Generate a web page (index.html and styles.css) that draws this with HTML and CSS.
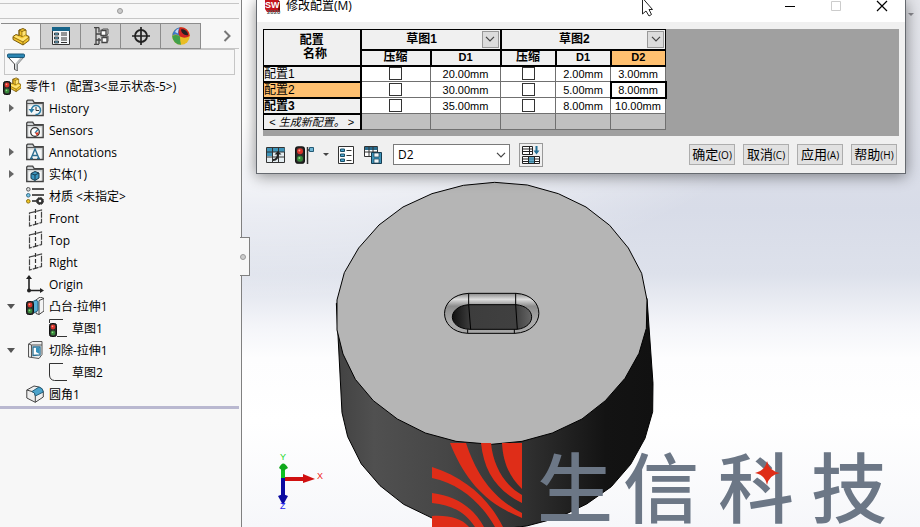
FILE: index.html
```
<!DOCTYPE html>
<html lang="zh-CN">
<head>
  <meta charset="UTF-8" />
  <meta name="viewport" content="width=device-width, initial-scale=1" />
  <title>修改配置</title>
  <link rel="stylesheet" href="styles.css">
</head>
<body>

  <!-- Shared icons -->
  <svg class="sprite" aria-hidden="true">
    <symbol id="part" viewBox="0 0 18 18">
      <path d="M7 2l4-1.500 3 1.500v5l3 1.500v4l-6 4.500-10-5.500v-3l3-2 3 1z" fill="#f3c52c" stroke="#7a5c10"/>
      <path d="M7 2l3 1.500v5L7 7zM10 3.500l4-1.500M10 8.500l4-2M1 9l10 5v3M11 14l6-5" fill="none" stroke="#7a5c10" stroke-width=".8"/>
      <path d="M10.500 4l3-1.300v4l-3 1.500zM2 8.600l2-1.200 6 3 3.500-2 2.500.8-5 4z" fill="#ffe477"/>
    </symbol>
    <symbol id="light" viewBox="0 0 8 14">
      <rect x=".5" y=".5" width="7" height="13" rx="2" fill="#2d2d2d" stroke="#111"/>
      <circle cx="4" cy="4" r="2.400" fill="#d9322a"/><circle cx="3.500" cy="3.400" r=".8" fill="#ff9c8c"/>
      <circle cx="4" cy="10" r="2.400" fill="#38873a"/><circle cx="3.500" cy="9.400" r=".8" fill="#8fdc88"/>
    </symbol>
    <symbol id="folder" viewBox="0 0 18 18">
      <path d="M.7 16.500V2l1-.8h5l1.500 2.500h9v12.800z" fill="#d0d3d4" stroke="#444" stroke-width="1.300"/>
      <path d="M2.500 6.500h13v9h-13z" fill="#f6f7f7"/>
      <path d="M1 4.500h16.500" stroke="#555"/>
    </symbol>
    <symbol id="plane" viewBox="0 0 18 18">
      <path d="M3.500 4L15.500 1v12.500l-12 3.500z" fill="none" stroke="#444" stroke-width="1.200" stroke-dasharray="6 1"/>
      <path d="M9.500 0v18" stroke="#333" stroke-width="1.200" stroke-dasharray="4 2"/>
    </symbol>
    <symbol id="chevron" viewBox="0 0 10 6">
      <path d="M1 .8l4 4 4-4" fill="none" stroke="#444" stroke-width="1.200"/>
    </symbol>
  </svg>

  <div class="app">
    <aside class="sidebar">
      <div class="grip"><span class="dot"></span></div>

      <nav class="tabs">
        <button class="tab active" aria-label="FeatureManager"><svg class="icon"><use href="#part"/></svg></button>
        <button class="tab" aria-label="PropertyManager">
          <svg class="icon" viewBox="0 0 18 18">
            <path d="M.5.500h17v17H.500z" fill="#f5f8fa" stroke="#333"/><path d="M0 0h18v4H0z" fill="#176489"/>
            <path d="M2.500 6h4v2h-4zM2.500 10h4v2h-4zM2.500 14h4v2h-4z" fill="#6db3d6" stroke="#222" stroke-width=".8"/>
            <path d="M9 6h6M9 8h6M9 11h6M9 13h6M9 15.500h6" stroke="#333"/>
          </svg>
        </button>
        <button class="tab" aria-label="ConfigurationManager">
          <svg class="icon" viewBox="0 0 18 18">
            <path d="M2 .500h5M4 .500v17M2 17.500h5M7 .500v5M7 11v6M4 7h5M4 13h5" fill="none" stroke="#444" stroke-width="1.300"/>
            <path d="M9 3.500h5v5H9zM10 10.500h5v5h-5z" fill="#fff" stroke="#444" stroke-width="1.300"/>
            <path d="M9 3.500l2-1.500h5v5l-2 1.500M10 10.500l2-1.500h4v5l-1 1.500" fill="none" stroke="#555"/>
          </svg>
        </button>
        <button class="tab" aria-label="DimXpertManager">
          <svg class="icon" viewBox="0 0 18 18">
            <circle cx="9" cy="9" r="6" fill="none" stroke="#222" stroke-width="1.800"/>
            <path d="M9 0v18M0 9h18" stroke="#222" stroke-width="1.700"/>
          </svg>
        </button>
        <button class="tab" aria-label="DisplayManager">
          <svg class="icon" viewBox="0 0 18 18">
            <circle cx="9" cy="9" r="8.800" fill="#e9bd24"/>
            <path d="M8 .3A8.800 8.800 0 0 0 .2 9q4-3 7.800.500z" fill="#3c78cc"/>
            <path d="M8 .3A8.800 8.800 0 0 1 17.800 9q-5 3-9.800.500C6 7 6 4 8 .3z" fill="#cf2723"/>
            <path d="M.2 9q4-2 7.800.500 0 5 1 8.300A8.800 8.800 0 0 1 .2 9z" fill="#41a04b"/>
            <path d="M9 2.500c3-1 7 2 7 5.500-3 1-7-2-7-5.500z" fill="#222"/>
            <path d="M3 5c1-2 2-3 4-3.500-1 2-1 4-1 5z" fill="#fff" opacity=".7"/>
          </svg>
        </button>
        <button class="more" aria-label="更多">
          <svg width="8" height="12" viewBox="0 0 8 12"><path d="M1.500 1l5 5-5 5" fill="none" stroke="#777" stroke-width="2"/></svg>
        </button>
      </nav>

      <label class="filter">
        <svg class="icon" viewBox="0 0 18 18">
          <path d="M1 4l6.500 7v5.500l3 1V11L17 4z" fill="#fff" stroke="#444"/>
          <path d="M8.500 10.500v6l2 .8V11l5.500-6h-3z" fill="#b9bdbf"/>
          <rect x=".5" y="1" width="17" height="3.500" rx="1" fill="#2a86b4" stroke="#1c5878"/>
        </svg>
        <input type="text" aria-label="过滤">
      </label>

      <ul class="tree">
        <li class="row root">
          <svg class="icon" viewBox="0 0 18 18"><use href="#part" x="4" y="0" width="15" height="16"/><use href="#light" x="0" y="4" width="8" height="14"/></svg>
          <span class="root-name">零件1</span><span>(配置3&lt;显示状态-5&gt;)</span>
        </li>
        <li class="row">
          <button class="twisty" aria-label="展开"></button>
          <svg class="icon" viewBox="0 0 18 18"><use href="#folder"/><path d="M5.500 11a4.500 4.500 0 1 1 4 4.500" fill="none" stroke="#2b7da5" stroke-width="1.500"/><path d="M2.500 10h6l-3 4z" fill="#2b7da5"/><path d="M10 8v3.500h3" fill="none" stroke="#333"/></svg>
          <span>History</span>
        </li>
        <li class="row">
          <span class="twisty none"></span>
          <svg class="icon" viewBox="0 0 18 18"><use href="#folder"/><circle cx="9" cy="11" r="4.300" fill="#fff" stroke="#333" stroke-width="1.300"/><path d="M9 12l3-3.500" stroke="#2b7da5" stroke-width="1.300"/><path d="M9 11.500h4l-2 3.500z" fill="#de3b27"/></svg>
          <span>Sensors</span>
        </li>
        <li class="row">
          <button class="twisty" aria-label="展开"></button>
          <svg class="icon" viewBox="0 0 18 18"><use href="#folder"/><path d="M5 15.500L9 6l4 9.500M6.500 12.500h5M4 15.500h3M11 15.500h3" fill="none" stroke="#2b6d90" stroke-width="1.400"/></svg>
          <span>Annotations</span>
        </li>
        <li class="row">
          <button class="twisty" aria-label="展开"></button>
          <svg class="icon" viewBox="0 0 18 18"><use href="#folder"/><path d="M5 8.500L9 6.500l4 1.500v5l-4 2.500-4-2z" fill="#3b96c0" stroke="#173c50"/><path d="M5 8.500l4 1.500 4-2M9 10v5" fill="none" stroke="#173c50"/></svg>
          <span>实体(1)</span>
        </li>
        <li class="row">
          <span class="twisty none"></span>
          <svg class="icon" viewBox="0 0 18 18">
            <path d="M6 2h12M6 8h12M6 14h5" stroke="#222" stroke-width="1.600"/>
            <circle cx="2.300" cy="2.300" r="1.800" fill="#ddd" stroke="#555"/><circle cx="2.300" cy="8.300" r="1.800" fill="#76c6e8" stroke="#366c86"/><circle cx="2.300" cy="14.300" r="1.800" fill="#f2c722" stroke="#8c7010"/>
            <circle cx="14" cy="14" r="2.400" fill="none" stroke="#333" stroke-width="2.200"/><circle cx="14" cy="14" r="3.500" fill="none" stroke="#333" stroke-dasharray="1.500 1.250"/>
          </svg>
          <span>材质 &lt;未指定&gt;</span>
        </li>
        <li class="row"><span class="twisty none"></span><svg class="icon"><use href="#plane"/></svg><span>Front</span></li>
        <li class="row"><span class="twisty none"></span><svg class="icon"><use href="#plane"/></svg><span>Top</span></li>
        <li class="row"><span class="twisty none"></span><svg class="icon"><use href="#plane"/></svg><span>Right</span></li>
        <li class="row">
          <span class="twisty none"></span>
          <svg class="icon" viewBox="0 0 18 18"><path d="M3 3v12.500h13" fill="none" stroke="#222" stroke-width="1.600"/><path d="M0 4l3-4 3 4zM14 13l4 2.500-4 2.500z" fill="#222"/><circle cx="3" cy="15.500" r="2" fill="#222"/></svg>
          <span>Origin</span>
        </li>
        <li class="row">
          <button class="twisty open" aria-label="折叠"></button>
          <svg class="icon" viewBox="0 0 18 18"><path d="M10 3l4-3 4 1.500V14l-5 3.500-3-1z" fill="#f4f4f4" stroke="#444"/><path d="M13 3.500v14M13 3.500l5-2" fill="none" stroke="#444"/><path d="M6 5l4-2 2 1.500v9L8 16z" fill="#58b0d8" stroke="#255f7d"/><use href="#light" x="0" y="4" width="8" height="14"/></svg>
          <span>凸台-拉伸1</span>
        </li>
        <li class="row child">
          <svg class="icon" viewBox="0 0 18 18"><path d="M.5 4V.500H14M8 17.500h10" fill="none" stroke="#333"/><use href="#light" x="0" y="4" width="8" height="14"/></svg>
          <span>草图1</span>
        </li>
        <li class="row">
          <button class="twisty open" aria-label="折叠"></button>
          <svg class="icon" viewBox="0 0 18 18"><path d="M2.500 3l4-2.500h9.500v13l-3 4-10.500-1.500z" fill="#eee" stroke="#555"/><path d="M2.500 3l3 1h10.500M5.500 4v12.500" fill="none" stroke="#555"/><path d="M7 6h7v8l-7 .500z" fill="#fff" stroke="#2a6f92" stroke-width="1.300"/><path d="M10 6.500h3.500V13L10 11z" fill="#3592bd"/></svg>
          <span>切除-拉伸1</span>
        </li>
        <li class="row child">
          <svg class="icon" viewBox="0 0 18 18"><path d="M14 .500H.500V12q.2 5 5 5.500H18" fill="none" stroke="#333"/></svg>
          <span>草图2</span>
        </li>
        <li class="row">
          <span class="twisty none"></span>
          <svg class="icon" viewBox="0 0 18 18"><path d="M.8 5L8 1l5 1q4 1 4.300 5v5l-8 5.300L.800 13z" fill="#eee" stroke="#444"/><path d="M.8 5L6 6.500q3 1 3.300 4v6.800" fill="none" stroke="#444"/><path d="M6 6.500L13 2q4 1 4.300 5l-8 4q0-3.500-3.300-4.500z" fill="#4ba3cb" stroke="#245e7b"/></svg>
          <span>圆角1</span>
        </li>
      </ul>
      <button class="flyout" aria-label="收起"><span class="dot"></span></button>
    </aside>

    <main class="viewport">
      <svg class="scene" viewBox="0 0 678 527" preserveAspectRatio="xMinYMin slice">
        <defs>
          <linearGradient id="side">
            <stop offset="0" stop-color="#424242"/><stop offset=".12" stop-color="#505050"/><stop offset=".35" stop-color="#464646"/>
            <stop offset=".6" stop-color="#303030"/><stop offset=".85" stop-color="#131313"/><stop offset="1" stop-color="#111"/>
          </linearGradient>
          <linearGradient id="rim" x2="0" y2="1">
            <stop offset="0" stop-color="#888"/><stop offset=".15" stop-color="#dedede"/><stop offset=".32" stop-color="#8c8c8c"/><stop offset=".7" stop-color="#aaa"/><stop offset="1" stop-color="#a5a5a5"/>
          </linearGradient>
          <linearGradient id="pocket">
            <stop offset="0" stop-color="#111"/><stop offset=".23" stop-color="#3d3d3d"/><stop offset=".8" stop-color="#404040"/><stop offset="1" stop-color="#666"/>
          </linearGradient>
          <clipPath id="logo"><path d="M190 443h90v84h-90z"/></clipPath>
        </defs>

        <!-- Extruded disc, drawn at three times its size -->
        <g transform="translate(78 170) scale(.333333)" stroke="#000" stroke-width="3" stroke-linejoin="round">
          <path fill="url(#side)" d="M49 400L66 728 83 800 124 882 180 947 251 1003 338 1045 420 1071 520 1080 620 1068 715 1043 800 1002 874 950 932 883 975 805 998 725 999 640 981 385z"/>
          <path fill="#b5b5b5" d="M430 46L524 37 622 45 715 71 798 111 869 166 925 234 965 310 981 390 979 475 957 550 915 625 856 692 786 747 697 789 606 814 514 823 408 814 316 789 232 747 160 692 106 628 69 552 51 480 51 390 73 308 116 234 177 165 249 111 336 71z"/>
          <path fill="url(#rim)" d="M446 370H588C680 375 680 485 585 490H443C350 485 350 375 446 370z"/>
          <path fill="url(#pocket)" d="M446 404H588C650 410 650 470 592 478H450C380 475 380 410 446 404z"/>
          <path fill="none" d="M446 370V404L452 478M587 370V404L592 478M443 478V490M583 478V490"/>
        </g>

        <!-- Axis triad -->
        <g class="axis">
          <path d="M41 479v-12" stroke="#10c020" stroke-width="4"/><path d="M37 468q4-9 9 0l-5 3z" fill="#10a81c"/>
          <path d="M43 479h18" stroke="#d01010" stroke-width="4"/><path d="M61 474l12 5-12 4z" fill="#d01010"/>
          <path d="M41 478v20" stroke="#0a0aa0" stroke-width="4"/><path d="M36 496l5-2 5 2-5 9z" fill="#0a0aa0"/>
          <text x="38" y="460" fill="#22d82c">Y</text>
          <text x="75" y="479" fill="#f01c1c">X</text>
          <text x="38" y="509" fill="#1c1cf0">Z</text>
        </g>

        <!-- Brand mark -->
        <g fill="#df2d18" clip-path="url(#logo)">
          <path d="M208 443h16c10 30 26 55 56 70v5c-38-15-58-40-72-75z"/>
          <path d="M239 443h10c2 22 13 42 31 52v8c-26-13-38-32-41-60z"/>
          <path d="M260 443h20v46c-14-14-19-28-20-46z"/>
          <path d="M190 467c34 11 57 32 71 60h-8c-13-23-34-43-63-49z"/>
          <path d="M190 493c24 3 41 14 52 34h-9c-10-15-23-22-43-24z"/>
          <path d="M190 516c17-1 29 2 37 11h-37z"/>
        </g>
        <g class="brand">
          <text x="295" y="517">生</text>
          <text x="381" y="517">信</text>
          <text x="476" y="517">科</text>
          <text x="569" y="517">技</text>
        </g>
        <path d="M525 461q2 10 13 12-11 2-13 12-2-10-12-12 10-2 12-12z" fill="#df2d18"/>
      </svg>
      <span class="corner"></span>

      <section class="dialog">
        <header class="titlebar">
          <svg width="18" height="14" viewBox="0 0 18 14">
            <path d="M1 0h13l2 2v10H3L1 9z" fill="#c4161c"/><path d="M14 0l2 2v10l-2-2z" fill="#75090d"/>
            <text x="1" y="8" class="sw">SW</text><text x="3" y="14" class="year">2020</text>
          </svg>
          <h1>修改配置(M)</h1>
          <div class="window-buttons">
            <button aria-label="最小化"><svg width="12" height="12"><path d="M1 6.500h10" stroke="#000"/></svg></button>
            <button aria-label="最大化" disabled><svg width="12" height="12"><path d="M1.500 1.500h9v9h-9z" fill="none" stroke="#ccc"/></svg></button>
            <button aria-label="关闭"><svg width="12" height="12"><path d="M1 1l10 10M11 1L1 11" stroke="#000" stroke-width="1.200"/></svg></button>
          </div>
        </header>

        <div class="sheet">
          <table>
            <colgroup><col class="c-name"><col class="c-wide"><col class="c-wide"><col class="c-dim"><col class="c-dim"><col class="c-dim"></colgroup>
            <thead>
              <tr class="group">
                <th rowspan="2">配置<br>&nbsp; 名称</th>
                <th colspan="2"><div class="group-head"><span>草图1</span><button aria-label="草图1"><svg width="10" height="6"><use href="#chevron"/></svg></button></div></th>
                <th colspan="3"><div class="group-head"><span>草图2</span><button aria-label="草图2"><svg width="10" height="6"><use href="#chevron"/></svg></button></div></th>
              </tr>
              <tr><th class="zh">压缩</th><th>D1</th><th class="zh">压缩</th><th>D1</th><th class="picked">D2</th></tr>
            </thead>
            <tbody>
              <tr>
                <th>配置1</th>
                <td><input type="checkbox" aria-label="配置1 草图1 压缩"></td><td>20.00mm</td>
                <td><input type="checkbox" aria-label="配置1 草图2 压缩"></td><td>2.00mm</td><td>3.00mm</td>
              </tr>
              <tr>
                <th class="picked">配置2</th>
                <td><input type="checkbox" aria-label="配置2 草图1 压缩"></td><td>30.00mm</td>
                <td><input type="checkbox" aria-label="配置2 草图2 压缩"></td><td>5.00mm</td><td class="cursor-cell">8.00mm</td>
              </tr>
              <tr>
                <th class="current">配置3</th>
                <td><input type="checkbox" aria-label="配置3 草图1 压缩"></td><td>35.00mm</td>
                <td><input type="checkbox" aria-label="配置3 草图2 压缩"></td><td>8.00mm</td><td>10.00mm</td>
              </tr>
              <tr class="new"><th>&lt; <i>生成新配置。</i> &gt;</th><td></td><td></td><td></td><td></td><td></td></tr>
            </tbody>
          </table>
        </div>

        <footer class="toolbar">
          <button class="tool" aria-label="隐藏">
            <svg width="20" height="18" viewBox="0 0 20 18"><path d="M.5 1.500h18v15H.500z" fill="#e4edf1" stroke="#333"/><path d="M1 2h17.500v4H1zM1 6h6v4H1z" fill="#3d93b8"/><path d="M.5 6h18M.500 11h18M6.500 1.500v15M12.500 1.500v15" stroke="#333"/><path d="M7 14q5 0 5-7" fill="none" stroke="#222" stroke-width="2"/><path d="M8.500 8.500L12 5l3.500 3.500z" fill="#222"/></svg>
          </button>
          <button class="tool split" aria-label="压缩状态">
            <svg width="20" height="18" viewBox="0 0 20 18"><use href="#light" x="0" y="0" width="10" height="18"/><path d="M12.500 1v17M13 4h3" stroke="#333" stroke-width="1.500"/><path d="M14.500 1.500h4v4h-4z" fill="#70b5d4" stroke="#235a75"/></svg>
            <span class="caret"></span>
          </button>
          <button class="tool" aria-label="属性">
            <svg width="17" height="18" viewBox="0 0 17 18"><path d="M.5.500h15v17H.500z" fill="#fff" stroke="#333"/><path d="M2.500 3h4v2.500h-4zM2.500 8h4v2.500h-4zM2.500 13h4v2.500h-4z" fill="#4ba3cb" stroke="#184c64"/><path d="M8.500 4.500h5M8.500 9.500h5M8.500 14.500h5" stroke="#333"/></svg>
          </button>
          <button class="tool" aria-label="保存表格">
            <svg width="20" height="18" viewBox="0 0 20 18"><path d="M.5.500h13v10H.500z" fill="#fff" stroke="#333"/><path d="M1 1h12.500v3H1z" fill="#286c8e"/><path d="M.5 6h13M5 1v10M9 1v10" stroke="#333"/><path d="M7.500 6.500h10v11h-10z" fill="#3d93b8" stroke="#173c50"/><path d="M10 7h5v4h-5zM10 13h5v4h-5z" fill="#eef5f8" stroke="#173c50" stroke-width=".7"/></svg>
          </button>
          <div class="combo">
            <select aria-label="参数"><option>D2</option></select>
            <svg width="10" height="6"><use href="#chevron"/></svg>
          </div>
          <button class="sort" aria-label="排序">
            <svg width="20" height="20" viewBox="0 0 20 20"><path d="M1.500 1.500h10v8h-10zM1.500 4h10M1.500 6.500h10M8.500 1.500v8M1.500 11.500h17v7h-17zM1.500 14h17M1.500 16.500h17M7.500 11.500v7M13.500 11.500v7" fill="#fff" stroke="#222"/><path d="M8 12h5v6H8z" fill="#3d93b8" opacity=".8"/><path d="M15.500 1v5" stroke="#236f94" stroke-width="2"/><path d="M12.500 5.500h6l-3 4z" fill="#236f94"/></svg>
          </button>
          <div class="actions">
            <button>确定<small>(O)</small></button>
            <button>取消<small>(C)</small></button>
            <button>应用<small>(A)</small></button>
            <button>帮助<small>(H)</small></button>
          </div>
        </footer>
        <svg class="pointer" width="12" height="17" viewBox="0 0 12 17"><path d="M1.500-2v16l3.500-3 3 5 2.500-1.500-2.500-5h3.500z" fill="#fff" stroke="#222"/></svg>
      </section>
    </main>
  </div>

</body>
</html>
```
FILE: styles.css
```
:root {
  --panel: #f7f7f7;
  --face: #f0f0f0;
  --line: #808080;
  --soft-line: #c6c6c6;
  --picked: #ffc070;
}
* {
  box-sizing: border-box;
}
body {
  margin: 0;
  font-family: "Open Sans", "Noto Sans CJK SC", sans-serif;
  font-size: 12px;
  color: #000;
}
button {
  padding: 0;
  border: none;
  background: none;
  font: inherit;
  color: inherit;
}
svg {
  display: block;
  flex: none;
}
.sprite {
  position: absolute;
  width: 0;
  height: 0;
}
.icon {
  width: 18px;
  height: 18px;
}
.app {
  display: flex;
  height: 100vh;
  overflow: hidden;
}

/* Feature tree */
.sidebar {
  position: relative;
  z-index: 1;
  flex: none;
  width: 242px;
  background: var(--panel);
  border-right: 1px solid var(--line);
}
.grip {
  display: flex;
  align-items: center;
  justify-content: center;
  height: 16px;
  margin: 3px 2px 0 0;
  border-top: 1px solid var(--soft-line);
  border-bottom: 1px solid var(--soft-line);
}
.dot {
  width: 6px;
  height: 6px;
  border: 1px solid #999;
  border-radius: 50%;
  background: #ccc;
}
.tabs {
  display: flex;
  height: 26px;
  margin: 4px 2px 0 1px;
  border-bottom: 1px solid var(--soft-line);
}
.tab {
  display: flex;
  align-items: center;
  justify-content: center;
  width: 40px;
  height: 26px;
  background: #d2d2d2;
  border: 1px solid #8c8c8c;
  border-left: none;
}
.tab.active {
  background: var(--panel);
  border-bottom: none;
}
.more {
  margin-left: auto;
  padding: 0 8px;
}
.filter {
  display: flex;
  align-items: center;
  height: 26px;
  margin: 0 6px 0 4px;
  padding-left: 2px;
  border: 1px solid var(--soft-line);
}
.filter input {
  flex: 1;
  min-width: 0;
  border: none;
  outline: none;
  background: none;
}
.tree {
  list-style: none;
  margin: 0 2px 0 0;
  padding: 0 0 1px;
  border-bottom: 3px solid #b9b8d0;
}
.row {
  display: flex;
  align-items: center;
  gap: 5px;
  height: 22px;
  padding-left: 3px;
  white-space: nowrap;
}
.row.child {
  padding-left: 49px;
}
.root-name {
  margin-right: 4px;
}
.twisty {
  display: flex;
  align-items: center;
  width: 18px;
  height: 18px;
  padding-left: 6px;
}
.twisty::before {
  content: "";
  border: 4px solid transparent;
  border-left: 5px solid #666;
  border-right: none;
}
.twisty.open {
  padding-left: 4px;
}
.twisty.open::before {
  border: 4px solid transparent;
  border-top: 5px solid #555;
  border-bottom: none;
}
.twisty.none::before {
  display: none;
}
.flyout {
  position: absolute;
  top: 237px;
  right: -9px;
  display: flex;
  align-items: center;
  width: 10px;
  height: 39px;
  background: var(--panel);
  border: 1px solid var(--line);
  border-left: none;
}

/* Graphics area */
.viewport {
  position: relative;
  flex: 1;
  min-width: 0;
  background:
    radial-gradient(ellipse 90% 300px at 0 0, rgba(255, 255, 255, 1) 40%, rgba(255, 255, 255, 0)),
    linear-gradient(#e4e5ea, #d8dce8 40%, #dde1eb 52%, #f4f5f9 62%, #fdfdfe 68%, #fff 80%, #f6f7fa);
}
.scene {
  width: 100%;
  height: 100%;
}
.axis text {
  font: 9px "Liberation Sans", sans-serif;
}
.brand {
  font: 500 76px "Noto Sans CJK SC", sans-serif;
  fill: #6c7786;
}
.corner {
  position: absolute;
  top: 13px;
  right: 6px;
  border: 3px solid transparent;
  border-top-color: #8a8a90;
}

/* Configuration dialog */
.dialog {
  position: absolute;
  top: 0;
  left: 14px;
  right: 14px;
  background: var(--face);
  border: 1px solid #666a70;
  border-top: none;
  box-shadow: 0 2px 14px rgba(0, 0, 0, 0.45);
}
.titlebar {
  display: flex;
  align-items: flex-start;
  gap: 4px;
  height: 22px;
  padding-left: 7px;
  background: #fff;
}
.titlebar h1 {
  margin: 0;
  font-size: 12px;
  line-height: 12px;
  font-weight: 400;
}
.sw {
  font: bold 9px "Liberation Sans", sans-serif;
  fill: #fff;
}
.year {
  font: bold 6px "Liberation Sans", sans-serif;
  fill: #555;
}
.window-buttons {
  display: flex;
  gap: 34px;
  margin-left: auto;
  padding-right: 17px;
}
.sheet {
  margin: 7px 6px 0;
  height: 107px;
  background: #a0a0a0;
}
table {
  width: 402px;
  table-layout: fixed;
  border-collapse: collapse;
  font: 11px/14px "Liberation Sans", "Noto Sans CJK SC", sans-serif;
}
.c-name {
  width: 97px;
}
.c-wide {
  width: 70px;
}
.c-dim {
  width: 55px;
}
tr {
  height: 16px;
}
tr.group {
  height: 20px;
}
th,
td {
  padding: 0;
  text-align: center;
  white-space: nowrap;
  border: 1px solid #707070;
  background: #fff;
}
th {
  border: 2px solid #000;
  background: var(--face);
}
.group th {
  border-top-width: 1px;
}
.group th:first-child,
tbody th {
  border-left-width: 1px;
}
.group th:last-child,
thead .picked {
  border-right-width: 1px;
}
thead th {
  font-size: 12px;
}
thead tr + tr th {
  font-size: 11px;
  line-height: 13px;
}
thead tr + tr .zh {
  font-size: 12px;
}
tbody th {
  font-size: 12px;
  font-weight: 400;
  text-align: left;
}
tbody th.current {
  font-weight: 700;
}
.new th {
  font-size: 11px;
  text-align: center;
  border-bottom-width: 1px;
}
.new td {
  background: #c0c0c0;
}
th.picked {
  background: var(--picked);
}
.group-head {
  display: grid;
  grid-template-columns: 1fr 17px;
  align-items: center;
  padding-right: 1px;
}
.group-head button {
  display: grid;
  place-items: center;
  height: 17px;
  background: #dcdcdc;
  border: 1px solid #999;
}
.cursor-cell {
  outline: 2px solid #000;
  outline-offset: -1px;
}
td input {
  display: block;
  appearance: none;
  width: 13px;
  height: 13px;
  margin: 0 auto;
  border: 1px solid #333;
  background: #fff;
}
.toolbar {
  display: flex;
  align-items: center;
  height: 37px;
  padding: 0 8px 0 9px;
}
.tool {
  margin-right: 9px;
}
.split {
  display: flex;
  align-items: center;
  gap: 8px;
}
.caret {
  border: 3px solid transparent;
  border-top-color: #444;
  border-bottom: none;
}
.combo {
  display: grid;
  align-items: center;
  width: 117px;
}
.combo select,
.combo svg {
  grid-area: 1 / 1;
}
.combo svg {
  justify-self: end;
  margin-right: 4px;
  pointer-events: none;
}
.combo select {
  appearance: none;
  height: 21px;
  padding: 0 4px;
  border: 1px solid #7a7a7a;
  border-radius: 0;
  background: #fff;
  font: inherit;
}
.sort {
  display: grid;
  place-items: center;
  width: 24px;
  height: 24px;
  margin-left: 9px;
  border: 1px solid #999;
}
.actions {
  display: flex;
  gap: 8px;
  margin-left: auto;
}
.actions button {
  width: 46px;
  height: 21px;
  line-height: 19px;
  white-space: nowrap;
  background: #e1e1e1;
  border: 1px solid #adadad;
  font-size: 13px;
}
.actions small {
  font-size: 10px;
}
.pointer {
  position: absolute;
  top: 0;
  left: 384px;
}
```
